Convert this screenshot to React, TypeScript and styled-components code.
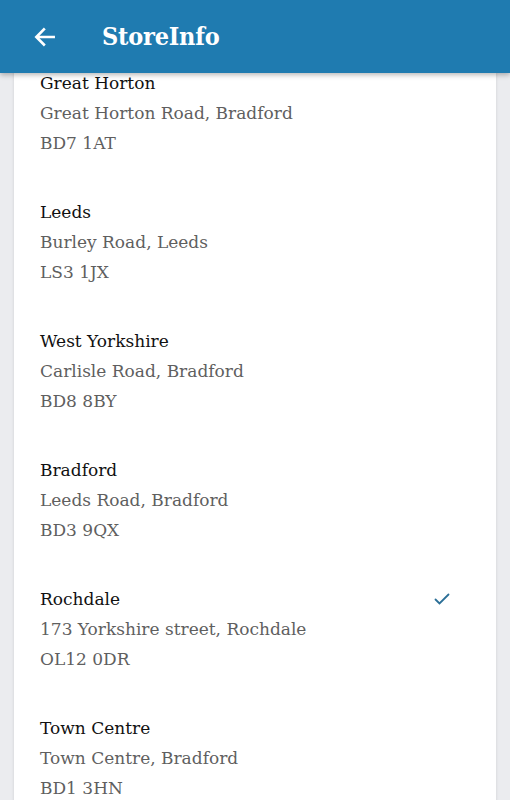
import React from "react";
import styled, { createGlobalStyle } from "styled-components";

const GlobalStyle = createGlobalStyle`
  html, body {
    margin: 0;
    padding: 0;
    background: #ebecef;
    font-family: "DejaVu Serif", serif;
  }
  #root {
    height: 800px;
    overflow: hidden;
  }
`;

const Screen = styled.div`
  display: flex;
  flex-direction: column;
  height: 800px;
  overflow: hidden;
  background: #ebecef;
`;

const TopBar = styled.header`
  position: relative;
  z-index: 2;
  display: flex;
  align-items: center;
  flex-shrink: 0;
  height: 73px;
  padding: 0 0 0 30px;
  background: #1f7bb0;
  box-shadow: 0 2px 5px rgb(0 0 0 / 28%);
  box-sizing: border-box;
`;

const BackButton = styled.button`
  display: flex;
  align-items: center;
  justify-content: center;
  width: 30px;
  height: 30px;
  padding: 0;
  margin-right: 42px;
  border: none;
  background: none;
  cursor: pointer;
`;

const Title = styled.h1`
  margin: 0;
  color: #ffffff;
  font-family: "DejaVu Serif Condensed", "DejaVu Serif", serif;
  font-size: 25px;
  font-weight: bold;
  letter-spacing: -0.2px;
`;

const Card = styled.div`
  margin: -5px 14px 0 14px;
  padding: 0 0 0 26px;
  background: #ffffff;
  box-shadow: 0 0 3px rgb(0 0 0 / 12%);
  flex: 1;
`;

const Store = styled.div`
  display: flex;
  flex-direction: column;
  padding: 0 44px 39px 0;
  position: relative;
`;

const Line = styled.div<{ $strong?: boolean }>`
  font-size: 17px;
  line-height: 30px;
  color: ${(p) => (p.$strong ? "#111111" : "#5f5f5f")};
`;

const Check = styled.span`
  position: absolute;
  top: 6px;
  right: 45px;
  width: 18px;
  height: 18px;
`;

const stores = [
  { name: "Great Horton", address: "Great Horton Road, Bradford", code: "BD7 1AT" },
  { name: "Leeds", address: "Burley Road, Leeds", code: "LS3 1JX" },
  { name: "West Yorkshire", address: "Carlisle Road, Bradford", code: "BD8 8BY" },
  { name: "Bradford", address: "Leeds Road, Bradford", code: "BD3 9QX" },
  { name: "Rochdale", address: "173 Yorkshire street, Rochdale", code: "OL12 0DR", selected: true },
  { name: "Town Centre", address: "Town Centre, Bradford", code: "BD1 3HN" },
];

export default function App() {
  return (
    <Screen>
      <GlobalStyle />
      <TopBar>
        <BackButton aria-label="Back">
          <svg width="26" height="26" viewBox="0 0 24 24" fill="none">
            <path
              d="M20 12H4.5M11 5l-7 7 7 7"
              stroke="#ffffff"
              strokeWidth="2.4"
              strokeLinecap="square"
            />
          </svg>
        </BackButton>
        <Title>StoreInfo</Title>
      </TopBar>
      <Card>
        {stores.map((s) => (
          <Store key={s.name}>
            <Line $strong>{s.name}</Line>
            <Line>{s.address}</Line>
            <Line>{s.code}</Line>
            {s.selected && (
              <Check>
                <svg width="18" height="18" viewBox="0 0 18 18" fill="none">
                  <path
                    d="M2.5 9.5l4 4 9-9"
                    stroke="#2b6f97"
                    strokeWidth="1.8"
                    strokeLinecap="round"
                  />
                </svg>
              </Check>
            )}
          </Store>
        ))}
      </Card>
    </Screen>
  );
}
